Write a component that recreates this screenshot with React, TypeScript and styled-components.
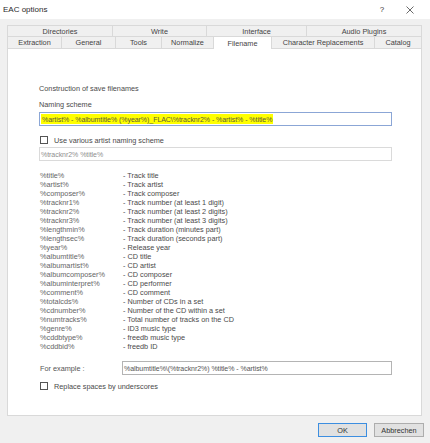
import React from 'react';
import styled, { createGlobalStyle } from 'styled-components';

const GlobalStyle = createGlobalStyle`
  html, body {
    margin: 0;
    padding: 0;
    background: #f0f0f0;
  }
  body {
    font-family: "Liberation Sans", Arial, sans-serif;
  }
`;

const topTabs = [
  { label: 'Directories', width: 106 },
  { label: 'Write', width: 94 },
  { label: 'Interface', width: 100 },
  { label: 'Audio Plugins', width: 115 },
];

const bottomTabs = [
  { label: 'Extraction', width: 55 },
  { label: 'General', width: 54 },
  { label: 'Tools', width: 46 },
  { label: 'Normalize', width: 52 },
  { label: 'Filename', width: 58, active: true },
  { label: 'Character Replacements', width: 103 },
  { label: 'Catalog', width: 47 },
];

const variables: [string, string][] = [
  ['%title%', '- Track title'],
  ['%artist%', '- Track artist'],
  ['%composer%', '- Track composer'],
  ['%tracknr1%', '- Track number (at least 1 digit)'],
  ['%tracknr2%', '- Track number (at least 2 digits)'],
  ['%tracknr3%', '- Track number (at least 3 digits)'],
  ['%lengthmin%', '- Track duration (minutes part)'],
  ['%lengthsec%', '- Track duration (seconds part)'],
  ['%year%', '- Release year'],
  ['%albumtitle%', '- CD title'],
  ['%albumartist%', '- CD artist'],
  ['%albumcomposer%', '- CD composer'],
  ['%albuminterpret%', '- CD performer'],
  ['%comment%', '- CD comment'],
  ['%totalcds%', '- Number of CDs in a set'],
  ['%cdnumber%', '- Number of the CD within a set'],
  ['%numtracks%', '- Total number of tracks on the CD'],
  ['%genre%', '- ID3 music type'],
  ['%cddbtype%', '- freedb music type'],
  ['%cddbid%', '- freedb ID'],
];

const App: React.FC = () => {
  return (
    <>
      <GlobalStyle />
      <Window>
        <TitleBar>
          <TitleText>EAC options</TitleText>
          <TitleButton>?</TitleButton>
          <TitleButton>
            <svg width="8" height="8" viewBox="0 0 8 8">
              <path d="M0.5 0.5L7.5 7.5M7.5 0.5L0.5 7.5" stroke="#444" strokeWidth="0.8" />
            </svg>
          </TitleButton>
        </TitleBar>

        <TabArea>
          <TabRow $height={11}>
            {topTabs.map((t) => (
              <Tab key={t.label} $width={t.width}>{t.label}</Tab>
            ))}
          </TabRow>
          <TabRow $height={12}>
            {bottomTabs.map((t) => (
              <Tab key={t.label} $width={t.width} $active={t.active}>{t.label}</Tab>
            ))}
          </TabRow>
        </TabArea>

        <Panel>
          <SectionTitle>Construction of save filenames</SectionTitle>
          <FieldLabel>Naming scheme</FieldLabel>
          <TextField $variant="focus">
            <Highlight>%artist% - %albumtitle% (%year%)_FLAC\%tracknr2% - %artist% - %title%</Highlight>
          </TextField>

          <CheckRow $top={9}>
            <CheckBox />
            <span>Use various artist naming scheme</span>
          </CheckRow>
          <TextField $variant="disabled">%tracknr2% %title%</TextField>

          <VarList>
            {variables.map(([name, desc]) => (
              <React.Fragment key={name}>
                <VarName>{name}</VarName>
                <VarDesc>{desc}</VarDesc>
              </React.Fragment>
            ))}
          </VarList>

          <ExampleRow>
            <ExampleLabel>For example :</ExampleLabel>
            <TextField $variant="plain" $width={270}>%albumtitle%\(%tracknr2%) %title% - %artist%</TextField>
          </ExampleRow>

          <CheckRow $top={6}>
            <CheckBox />
            <span>Replace spaces by underscores</span>
          </CheckRow>
        </Panel>

        <Footer>
          <Button $default>OK</Button>
          <Button>Abbrechen</Button>
        </Footer>
      </Window>
    </>
  );
};

const Window = styled.div`
  width: 430px;
  height: 443px;
  background: #f0f0f0;
  display: flex;
  flex-direction: column;
  overflow: hidden;
  font-size: 7.3px;
  color: #4a4a4a;
`;

const TitleBar = styled.div`
  height: 19px;
  background: #ffffff;
  display: flex;
  align-items: center;
  padding: 0 6px 0 3px;
`;

const TitleText = styled.div`
  flex: 1;
  font-size: 8px;
  color: #2a2a2a;
`;

const TitleButton = styled.div`
  width: 28px;
  height: 19px;
  display: flex;
  align-items: center;
  justify-content: center;
  font-size: 8px;
  color: #333;
`;

const TabArea = styled.div`
  padding: 6px 8px 0 7px;
  display: flex;
  flex-direction: column;
`;

const TabRow = styled.div<{ $height: number }>`
  display: flex;
  height: ${(p) => p.$height}px;
`;

const Tab = styled.div<{ $width: number; $active?: boolean }>`
  box-sizing: border-box;
  width: ${(p) => p.$width}px;
  display: flex;
  align-items: center;
  justify-content: center;
  white-space: nowrap;
  border: 1px solid #d9d9d9;
  border-bottom: none;
  border-left-width: 0;
  background: ${(p) => (p.$active ? '#ffffff' : '#f0f0f0')};
  position: relative;
  z-index: ${(p) => (p.$active ? 1 : 0)};
  margin-bottom: ${(p) => (p.$active ? '-1px' : '0')};
  height: ${(p) => (p.$active ? 'calc(100% + 1px)' : '100%')};
  color: #444;

  &:first-child {
    border-left-width: 1px;
  }
`;

const Panel = styled.div`
  box-sizing: border-box;
  margin: 0 8px 0 7px;
  height: 368px;
  background: #ffffff;
  border: 1px solid #d9d9d9;
  padding: 35px 0 0 31px;
  display: flex;
  flex-direction: column;
`;

const SectionTitle = styled.div`
  height: 10px;
  line-height: 10px;
`;

const FieldLabel = styled.div`
  height: 10px;
  line-height: 10px;
  margin-top: 6px;
`;

const TextField = styled.div<{ $variant: 'focus' | 'disabled' | 'plain'; $width?: number }>`
  box-sizing: border-box;
  width: ${(p) => p.$width ?? 353}px;
  height: 14px;
  margin-top: ${(p) => (p.$variant === 'plain' ? 0 : 2)}px;
  padding: 1px 1px 1px 1px;
  display: flex;
  align-items: center;
  white-space: nowrap;
  overflow: hidden;
  font-size: 7px;
  letter-spacing: -0.05px;
  background: #ffffff;
  border: 1px solid
    ${(p) => (p.$variant === 'focus' ? '#8ba6d6' : p.$variant === 'disabled' ? '#dadada' : '#b4b4b4')};
  color: ${(p) => (p.$variant === 'disabled' ? '#8f8f8f' : '#555')};
`;

const Highlight = styled.span`
  background: #ffff00;
  height: 100%;
  display: flex;
  align-items: center;
  padding: 0 1px;
  color: #5a5a3a;
`;

const CheckRow = styled.div<{ $top: number }>`
  display: flex;
  align-items: center;
  gap: 6px;
  height: 10px;
  margin-top: ${(p) => p.$top}px;
  padding-left: 1px;
`;

const CheckBox = styled.span`
  box-sizing: border-box;
  width: 8px;
  height: 8px;
  border: 1px solid #555;
  background: #fff;
`;

const VarList = styled.div`
  display: grid;
  grid-template-columns: 83px 1fr;
  grid-auto-rows: 9px;
  line-height: 9px;
  margin-top: 10px;
  padding-left: 1px;
`;

const VarName = styled.div`
  color: #666;
`;

const VarDesc = styled.div`
  color: #4a4a4a;
`;

const ExampleRow = styled.div`
  display: flex;
  align-items: center;
  margin-top: 10px;
  padding-left: 1px;
`;

const ExampleLabel = styled.div`
  width: 82px;
  color: #555;
`;

const Footer = styled.div`
  display: flex;
  justify-content: flex-end;
  gap: 7px;
  padding: 7px 6px 0 0;
`;

const Button = styled.div<{ $default?: boolean }>`
  box-sizing: border-box;
  width: ${(p) => (p.$default ? 49 : 50)}px;
  height: 14px;
  display: flex;
  align-items: center;
  justify-content: center;
  background: #e1e1e1;
  border: 1px solid ${(p) => (p.$default ? '#3c8ee0' : '#adadad')};
  color: #333;
`;

export default App;
